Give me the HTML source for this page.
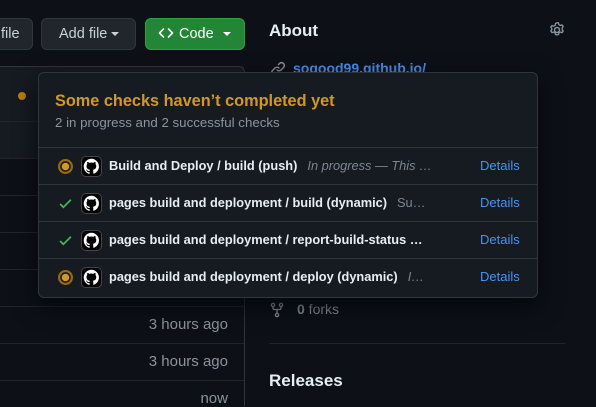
<!DOCTYPE html>
<html><head><meta charset="utf-8"><style>
*{box-sizing:border-box;margin:0;padding:0}
body{width:596px;height:405px;background:#0d1117;font-family:"Liberation Sans",sans-serif;position:relative;overflow:hidden;color:#e6edf3}
.abs{position:absolute}
.btn{position:absolute;top:18px;height:32px;border:1px solid #30363d;background:#21262d;border-radius:6px;color:#c9d1d9;font-size:14.5px;line-height:30px;padding:0 12px;white-space:nowrap}
.tri{display:inline-block;width:0;height:0;border-left:4px solid transparent;border-right:4px solid transparent;border-top:4px solid currentColor;vertical-align:middle;margin-left:4px}
.tl{position:absolute;left:0;width:244px;height:1px;background:#21262d}
.time{position:absolute;right:368px;font-size:15px;color:#8b949e}
.pop{position:absolute;left:38px;top:72px;width:500px;height:226px;background:#161b22;border:1px solid #30363d;border-radius:6px;box-shadow:0 8px 24px rgba(1,4,9,.8)}
.row{position:absolute;left:0;width:498px;height:37px;border-top:1px solid #30363d}
.row .ic{position:absolute;left:19px;top:11px;width:15px;height:15px}
.row .gh{position:absolute;left:42px;top:8px;width:21px;height:21px;background:#000;border-radius:5px;border:1px solid #444}
.row .t{position:absolute;left:70px;top:10px;font-size:12.8px;font-weight:bold;color:#e6edf3;white-space:nowrap}
.row .s{color:#7d8590;font-weight:normal;font-style:italic;margin-left:10px}
.row .d{position:absolute;left:441px;top:10px;font-size:13px;color:#4493f8}
</style></head><body>
<div class="btn" style="left:-12px;padding-left:12px;width:45px">file</div>
<div class="btn" style="left:41px;width:95px;padding-left:17px">Add file<span class="tri"></span></div>
<div class="btn" style="left:145px;width:100px;background:#238636;border-color:#2ea043;color:#fff;padding-left:12px">
<svg width="16" height="16" viewBox="0 0 16 16" style="vertical-align:-3px;margin-right:5px"><path d="M5.5 4 1.5 8l4 4M10.5 4l4 4-4 4" fill="none" stroke="#fff" stroke-width="1.6" stroke-linecap="round" stroke-linejoin="round"/></svg>Code<span class="tri" style="margin-left:9px"></span></div>

<div class="abs" style="left:-1px;top:66px;width:245px;height:92px;background:#161b22"></div>
<div class="abs" style="left:0;top:66px;width:245px;height:340px;border:1px solid #30363d;border-left:none;border-bottom:none;border-radius:0 6px 0 0"></div>
<div class="abs" style="left:18px;top:92px;width:8px;height:8px;border-radius:50%;background:#bb8009"></div>
<div class="tl" style="top:121px"></div><div class="tl" style="top:158px"></div><div class="tl" style="top:195px"></div><div class="tl" style="top:232px"></div><div class="tl" style="top:269px"></div><div class="tl" style="top:306px"></div><div class="tl" style="top:343px"></div><div class="tl" style="top:380px"></div>
<div class="time" style="top:316px">3 hours ago</div>
<div class="time" style="top:353px">3 hours ago</div>
<div class="time" style="top:390px">now</div>

<div class="abs" style="left:269px;top:21px;font-size:17px;font-weight:bold;color:#e6edf3">About</div>
<svg class="abs" style="left:548px;top:21px" width="18" height="18" viewBox="0 0 16 16"><circle cx="8" cy="8" r="2.2" fill="none" stroke="#8b949e" stroke-width="1.3"/><path d="M8 1.5l1.3.2.4 1.6 1.2.7 1.6-.5 1 1.3-.9 1.4v1.4l.9 1.4-1 1.3-1.6-.5-1.2.7-.4 1.6-1.3.2-1.3-.2-.4-1.6-1.2-.7-1.6.5-1-1.3.9-1.4V6.8L2.5 5.4l1-1.3 1.6.5 1.2-.7.4-1.6z" fill="none" stroke="#8b949e" stroke-width="1.2" stroke-linejoin="round"/></svg>
<div class="abs" style="left:293px;top:60px;font-size:14px;font-weight:bold;color:#4493f8;text-decoration:underline">sogood99.github.io/</div>
<svg class="abs" style="left:270px;top:61px" width="16" height="16" viewBox="0 0 16 16"><path d="M7 9a3 3 0 0 0 4 0l2.5-2.5a2.8 2.8 0 0 0-4-4L8.5 3.5M9 7a3 3 0 0 0-4 0L2.5 9.5a2.8 2.8 0 0 0 4 4l1-1" fill="none" stroke="#8b949e" stroke-width="1.5" stroke-linecap="round"/></svg>
<svg class="abs" style="left:270px;top:302px" width="14" height="16" viewBox="0 0 14 16"><circle cx="3" cy="3" r="1.6" fill="none" stroke="#8b949e" stroke-width="1.3"/><circle cx="11" cy="3" r="1.6" fill="none" stroke="#8b949e" stroke-width="1.3"/><circle cx="7" cy="13" r="1.6" fill="none" stroke="#8b949e" stroke-width="1.3"/><path d="M3 4.6V6q0 1.5 1.5 1.5h5Q11 7.5 11 6V4.6M7 7.5v4" fill="none" stroke="#8b949e" stroke-width="1.3"/></svg>
<div class="abs" style="left:297px;top:301px;font-size:14px;color:#8b949e"><b style="color:#8b949e">0</b> forks</div>
<div class="abs" style="left:269px;top:343px;width:296px;height:1px;background:#21262d"></div>
<div class="abs" style="left:269px;top:371px;font-size:17px;font-weight:bold;color:#e6edf3">Releases</div>

<div class="pop">
<div class="abs" style="left:16px;top:19px;font-size:16.3px;font-weight:bold;color:#d29922;white-space:nowrap">Some checks haven’t completed yet</div>
<div class="abs" style="left:16px;top:42px;font-size:13.3px;color:#8b949e;white-space:nowrap">2 in progress and 2 successful checks</div>
<div class="row" style="top:74px">
<svg class="ic" viewBox="0 0 14 14"><circle cx="7" cy="7" r="6" fill="none" stroke="#9e6a03" stroke-width="2"/><circle cx="7" cy="7" r="3.5" fill="#d29922"/></svg>
<div class="gh"><svg width="19" height="19" viewBox="0 0 16 16"><path fill="#fff" d="M8 1.5a6.5 6.5 0 0 0-2 12.7c.3 0 .4-.1.4-.3v-1.2c-1.8.4-2.2-.8-2.2-.8-.3-.8-.7-1-.7-1-.6-.4 0-.4 0-.4.6 0 1 .7 1 .7.6 1 1.5.7 1.9.5 0-.4.2-.7.4-.9-1.4-.2-3-.7-3-3.2 0-.7.3-1.3.7-1.7-.1-.2-.3-.8 0-1.7 0 0 .5-.2 1.8.7a6 6 0 0 1 3.2 0c1.2-.9 1.8-.7 1.8-.7.3.9.1 1.5 0 1.7.4.4.7 1 .7 1.7 0 2.5-1.5 3-3 3.2.3.2.5.6.5 1.2v1.8c0 .2.1.4.5.3A6.5 6.5 0 0 0 8 1.5z"/></svg></div>
<div class="t">Build and Deploy / build (push)<span class="s">In progress — This …</span></div><div class="d">Details</div></div>
<div class="row" style="top:111px">
<svg class="ic" viewBox="0 0 14 14"><path d="M2 7.5l3 3 7-7" fill="none" stroke="#3fb950" stroke-width="1.6"/></svg>
<div class="gh"><svg width="19" height="19" viewBox="0 0 16 16"><path fill="#fff" d="M8 1.5a6.5 6.5 0 0 0-2 12.7c.3 0 .4-.1.4-.3v-1.2c-1.8.4-2.2-.8-2.2-.8-.3-.8-.7-1-.7-1-.6-.4 0-.4 0-.4.6 0 1 .7 1 .7.6 1 1.5.7 1.9.5 0-.4.2-.7.4-.9-1.4-.2-3-.7-3-3.2 0-.7.3-1.3.7-1.7-.1-.2-.3-.8 0-1.7 0 0 .5-.2 1.8.7a6 6 0 0 1 3.2 0c1.2-.9 1.8-.7 1.8-.7.3.9.1 1.5 0 1.7.4.4.7 1 .7 1.7 0 2.5-1.5 3-3 3.2.3.2.5.6.5 1.2v1.8c0 .2.1.4.5.3A6.5 6.5 0 0 0 8 1.5z"/></svg></div>
<div class="t">pages build and deployment / build (dynamic)<span class="s" style="font-style:normal">Su…</span></div><div class="d">Details</div></div>
<div class="row" style="top:148px">
<svg class="ic" viewBox="0 0 14 14"><path d="M2 7.5l3 3 7-7" fill="none" stroke="#3fb950" stroke-width="1.6"/></svg>
<div class="gh"><svg width="19" height="19" viewBox="0 0 16 16"><path fill="#fff" d="M8 1.5a6.5 6.5 0 0 0-2 12.7c.3 0 .4-.1.4-.3v-1.2c-1.8.4-2.2-.8-2.2-.8-.3-.8-.7-1-.7-1-.6-.4 0-.4 0-.4.6 0 1 .7 1 .7.6 1 1.5.7 1.9.5 0-.4.2-.7.4-.9-1.4-.2-3-.7-3-3.2 0-.7.3-1.3.7-1.7-.1-.2-.3-.8 0-1.7 0 0 .5-.2 1.8.7a6 6 0 0 1 3.2 0c1.2-.9 1.8-.7 1.8-.7.3.9.1 1.5 0 1.7.4.4.7 1 .7 1.7 0 2.5-1.5 3-3 3.2.3.2.5.6.5 1.2v1.8c0 .2.1.4.5.3A6.5 6.5 0 0 0 8 1.5z"/></svg></div>
<div class="t">pages build and deployment / report-build-status …</div><div class="d">Details</div></div>
<div class="row" style="top:185px">
<svg class="ic" viewBox="0 0 14 14"><circle cx="7" cy="7" r="6" fill="none" stroke="#9e6a03" stroke-width="2"/><circle cx="7" cy="7" r="3.5" fill="#d29922"/></svg>
<div class="gh"><svg width="19" height="19" viewBox="0 0 16 16"><path fill="#fff" d="M8 1.5a6.5 6.5 0 0 0-2 12.7c.3 0 .4-.1.4-.3v-1.2c-1.8.4-2.2-.8-2.2-.8-.3-.8-.7-1-.7-1-.6-.4 0-.4 0-.4.6 0 1 .7 1 .7.6 1 1.5.7 1.9.5 0-.4.2-.7.4-.9-1.4-.2-3-.7-3-3.2 0-.7.3-1.3.7-1.7-.1-.2-.3-.8 0-1.7 0 0 .5-.2 1.8.7a6 6 0 0 1 3.2 0c1.2-.9 1.8-.7 1.8-.7.3.9.1 1.5 0 1.7.4.4.7 1 .7 1.7 0 2.5-1.5 3-3 3.2.3.2.5.6.5 1.2v1.8c0 .2.1.4.5.3A6.5 6.5 0 0 0 8 1.5z"/></svg></div>
<div class="t">pages build and deployment / deploy (dynamic)<span class="s">I…</span></div><div class="d">Details</div></div>
</div>
</body></html>
